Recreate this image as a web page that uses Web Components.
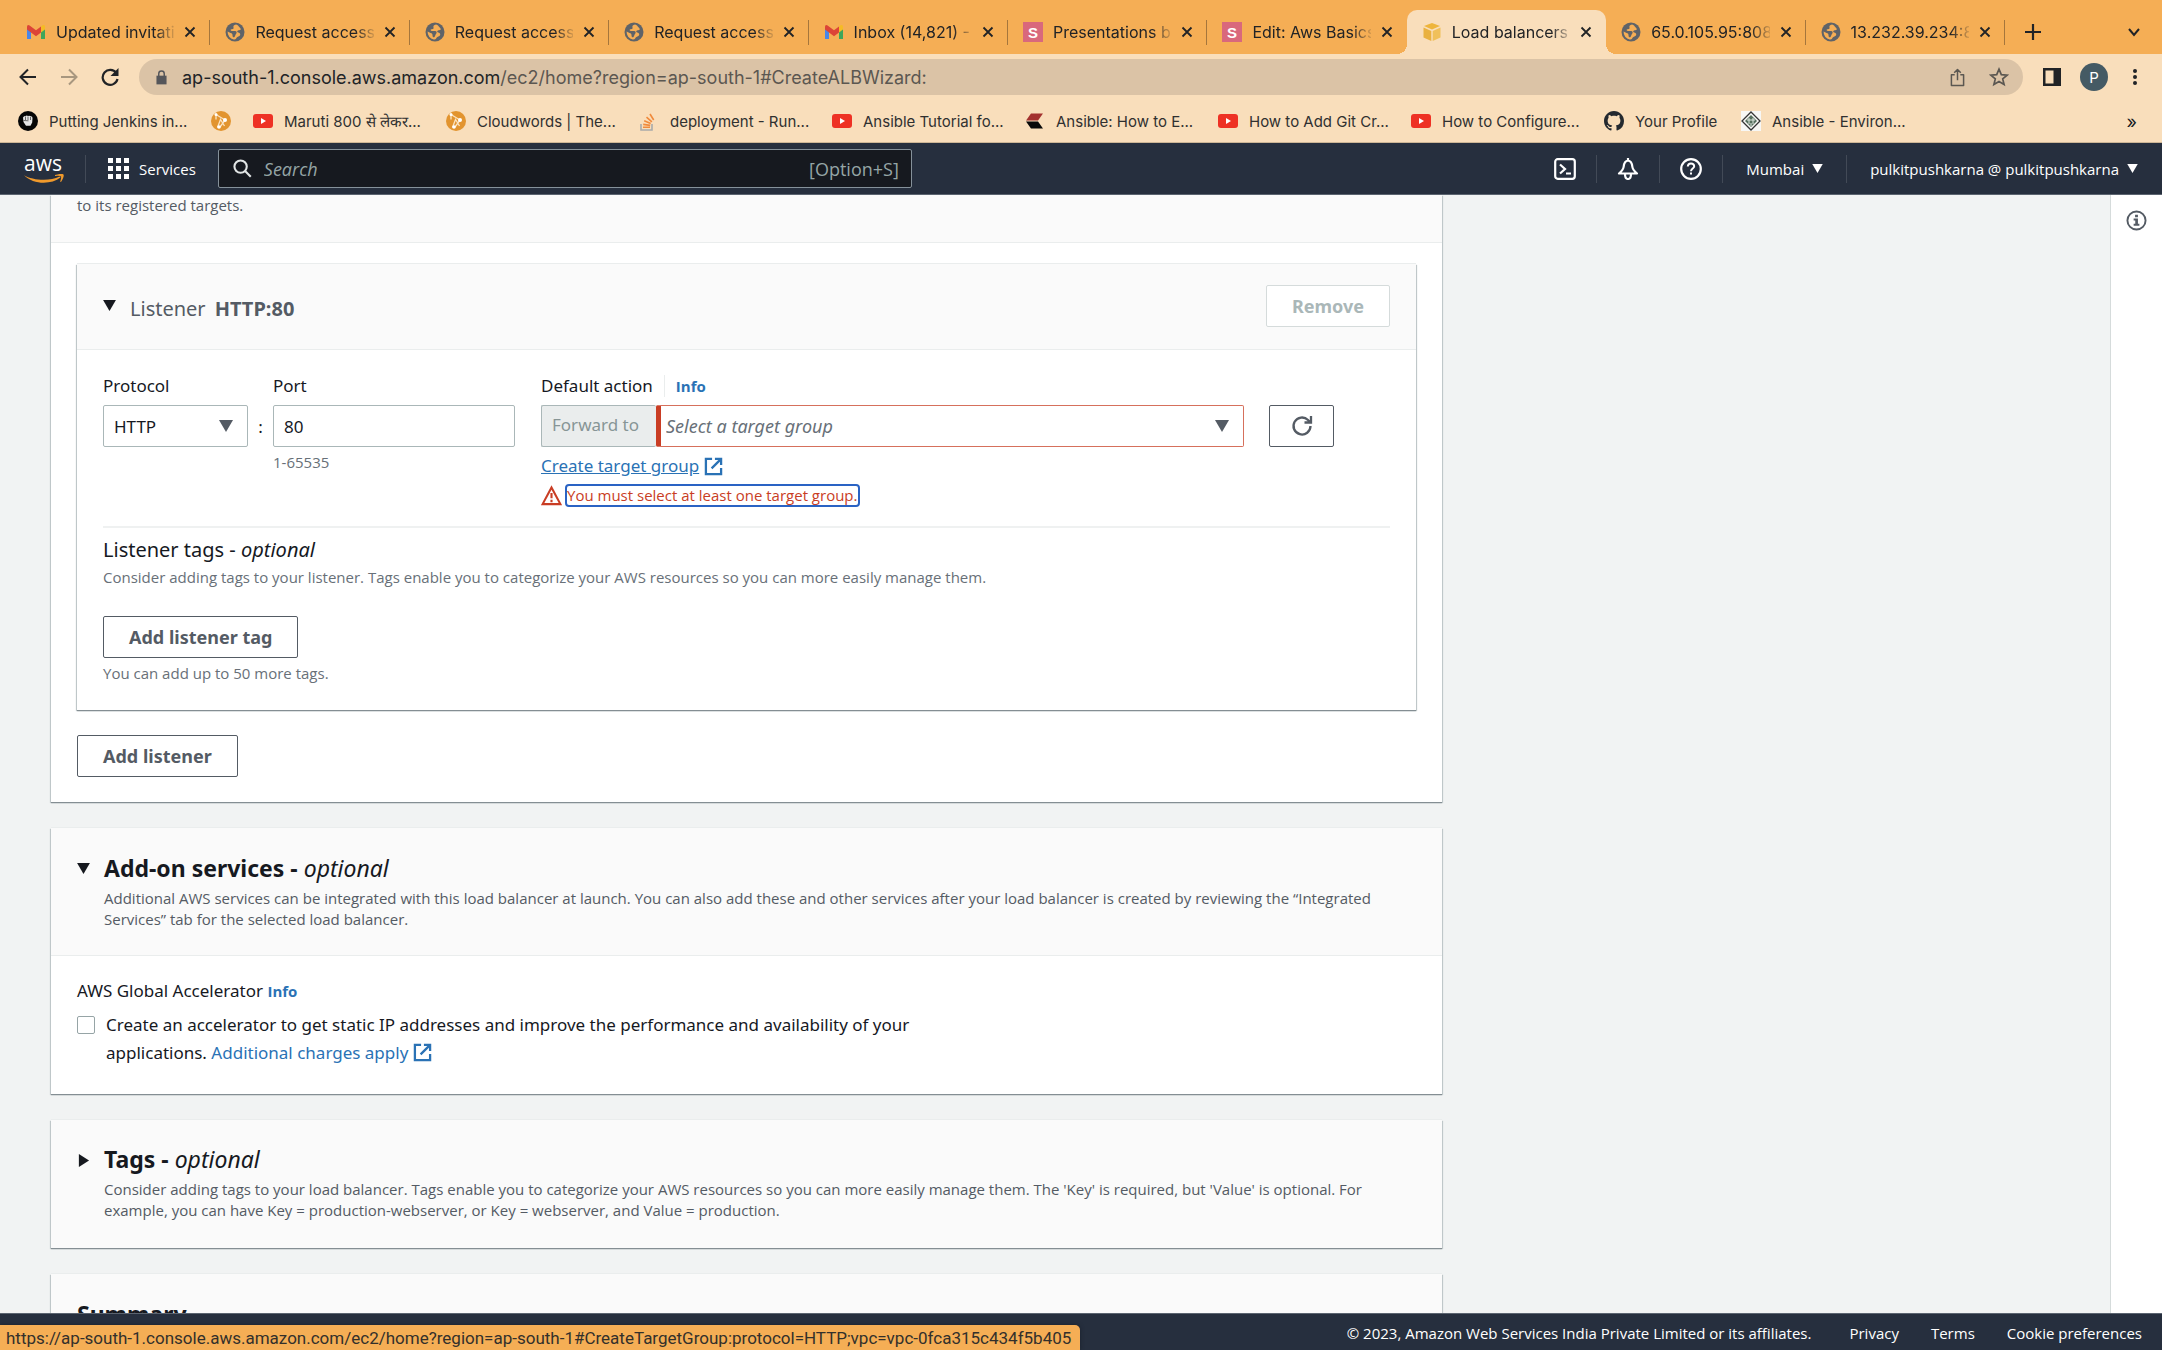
<!DOCTYPE html>
<html lang="en">
<head>
<meta charset="utf-8">
<title>Load balancers</title>
<style>
  html, body { margin: 0; height: 100%; }
  body {
    display: flex;
    flex-direction: column;
    overflow: hidden;
    background: #f1f3f3;
    color: #16191f;
    font-family: "Noto Sans", "Open Sans", sans-serif;
    font-size: 17px;
    --small: "Open Sans", "Noto Sans", sans-serif;
  }
</style>
</head>
<body>
<browser-tabs></browser-tabs>
<browser-toolbar></browser-toolbar>
<bookmark-bar></bookmark-bar>
<aws-nav></aws-nav>
<console-page></console-page>
<aws-footer></aws-footer>
<status-bubble>https://ap-south-1.console.aws.amazon.com/ec2/home?region=ap-south-1#CreateTargetGroup:protocol=HTTP;vpc=vpc-0fca315c434f5b405</status-bubble>

<script>
// name -> [viewBox, markup]
const ICONS = {
  gmail: ["0 0 20 20", `<path d="M1 5v12h4V8z" fill="#4a86e8"/><path d="M19 5v12h-4V8z" fill="#3fa65b"/><path d="M15 4.500l1.600-1.200Q19 2 19 5v2.500l-4 3z" fill="#f5bb25"/><path d="M1 7.500V5q0-3 2.600-1.600L10 8.300l5-3.800v6L10 14.200z" fill="#dc4437"/>`],
  globe: ["0 0 20 20", `<circle cx="10" cy="10" r="9.500" fill="#5f6368"/><path d="M11 2.500c-2 .3-3 1.500-2.500 3 .4 1.200-.5 1.800-1.800 1.700C5 7 5.500 9 7 9h3c2 0 2 2 1 3s-.6 2.500-1.800 3.200c-1 .5-1.700-.5-1.700-2s-.5-1.800-2-2.200L2.600 9.600A7.500 7.500 0 0 0 8.700 17.400c2.500.4 2.200-1.400 3.300-2.200 1.200-.8 2.800-.8 3.200-2.400.3-1.200-.9-1.900-2-2.200-1.500-.4-1.200-1.600-.2-2 1-.5 1.600-.3 2.500-.8.9-.6 0-1.300-.8-2.200-.9-1-1.700-2.900-3.700-3.100z" fill="#f5ae55"/>`],
  slides: ["0 0 20 20", `<path d="M0 0h20v20H0z" fill="#d9687c"/><text x="10" y="15.500" text-anchor="middle" font-family="Liberation Sans" font-size="15" font-weight="700" fill="#fff">S</text>`],
  cube: ["0 0 20 20", `<path d="M10 1l8 3-8 3.500L2 4z" fill="#eeb53c"/><path d="M1.500 5.500L9.300 9v10l-7.800-3.500z" fill="#e9b140"/><path d="M18.500 5.500L10.700 9v10l7.800-3.500z" fill="#f0c05a"/>`],
  close: ["0 0 12 12", `<path d="M1.500 1.500l9 9M10.500 1.500l-9 9" stroke="currentColor" stroke-width="1.800"/>`],
  plus: ["0 0 16 16", `<path d="M8 0v16M0 8h16" stroke="currentColor" stroke-width="2.200"/>`],
  chevron: ["0 0 12 12", `<path d="M1 3l5 6 5-6" fill="none" stroke="currentColor" stroke-width="2"/>`],
  back: ["0 0 18 18", `<path d="M17 9H2M9 1.500L1.500 9 9 16.500" fill="none" stroke="currentColor" stroke-width="2"/>`],
  forward: ["0 0 18 18", `<path d="M1 9h15M9 1.500L16.500 9 9 16.500" fill="none" stroke="currentColor" stroke-width="2"/>`],
  reload: ["0 0 18 18", `<path d="M15.300 5A7.500 7.500 0 1 0 16.500 11" fill="none" stroke="currentColor" stroke-width="2.200"/><path d="M17.500 0v8h-8z" fill="currentColor"/>`],
  lock: ["0 0 12 16", `<path d="M.5 6h11v9.500H.5z" fill="currentColor"/><path d="M3 7V4a3 3 0 0 1 6 0v3" fill="none" stroke="currentColor" stroke-width="1.600"/>`],
  share: ["0 0 16 20", `<path d="M5 7H1.500v11.500h13V7H11M8 13V1.500M4.500 5L8 1.500 11.500 5" fill="none" stroke="currentColor" stroke-width="1.600" stroke-linejoin="round"/>`],
  star: ["0 0 20 20", `<path d="M10 2.200l2.300 5.400 5.900.5-4.500 3.800 1.400 5.700-5.100-3-5.100 3 1.400-5.700-4.500-3.800 5.900-.5z" fill="none" stroke="currentColor" stroke-width="1.700"/>`],
  panel: ["0 0 18 18", `<path d="M0 0h18v18H0z" fill="currentColor"/><path d="M2.500 2.500h8v13h-8z" fill="#f9debb"/>`],
  dots: ["0 0 6 20", `<circle cx="3" cy="4" r="2" fill="currentColor"/><circle cx="3" cy="10" r="2" fill="currentColor"/><circle cx="3" cy="16" r="2" fill="currentColor"/>`],
  fist: ["0 0 20 20", `<circle cx="10" cy="10" r="10" fill="#060606"/><path d="M5 6.500Q6 4.500 7.500 5q1.200-1 2.500 0 1.500-.8 2.500.3 2-.3 2 1.700l-.3 4.500-1.700 3.200H8L5.500 11z" fill="#e6e6e6"/><path d="M7.500 5.500V9M10 5.500V9M12.500 6v3M5.500 9.500l5 .3" stroke="#333" stroke-width=".7"/>`],
  cloudwords: ["0 0 20 20", `<circle cx="10" cy="10" r="10" fill="#e2942f"/><path d="M5 3.500l9 5.500M5 3.500v5M14 9l-5 7M6.500 16.500l3-8 4 6.500" fill="none" stroke="#fbe3c0" stroke-width="1.300"/><circle cx="5" cy="3.500" r="1.500" fill="#fff"/><circle cx="14" cy="9" r="2" fill="#fff"/><circle cx="8" cy="16" r="1.800" fill="#fff"/>`],
  youtube: ["0 0 20 20", `<rect y="3" width="20" height="14" rx="3" fill="#ee3124"/><path d="M8 7l5 3-5 3z" fill="#fff"/>`],
  stack: ["0 0 20 20", `<path d="M2 13v6h11v-6" fill="none" stroke="#a9aaab" stroke-width="1.600"/><path d="M4 16.300h7M4.200 13.400l7 1M5.200 9.800l6.500 2.700M7.500 6.200l5.400 4.600M11 3l3.700 6" stroke="#f08a3c" stroke-width="1.600"/>`],
  kodekloud: ["0 0 20 20", `<path d="M6 2.500h12L13 9.500H1z" fill="#a3312e"/><path d="M1 10.500h12l5 7H6z" fill="#090909"/>`],
  github: ["0 0 16 16", `<path fill="#24292f" d="M8 0C3.580 0 0 3.580 0 8c0 3.540 2.290 6.530 5.470 7.590.4.070.55-.17.55-.38 0-.19-.01-.82-.01-1.490-2.010.37-2.530-.49-2.690-.94-.09-.23-.48-.94-.82-1.130-.28-.15-.68-.52-.01-.53.63-.01 1.080.58 1.230.82.72 1.210 1.870.87 2.330.66.07-.52.28-.87.51-1.070-1.780-.2-3.640-.89-3.640-3.950 0-.87.31-1.590.82-2.150-.08-.2-.36-1.020.08-2.120 0 0 .67-.21 2.200.82.64-.18 1.320-.27 2-.27s1.360.09 2 .27c1.530-1.040 2.200-.82 2.200-.82.44 1.100.16 1.920.08 2.120.51.56.82 1.270.82 2.150 0 3.070-1.870 3.750-3.650 3.950.29.25.54.73.54 1.480 0 1.070-.01 1.930-.01 2.200 0 .21.15.46.55.38A8 8 0 0 0 16 8c0-4.420-3.580-8-8-8z"/>`],
  jinja: ["0 0 20 20", `<path d="M0 0h20v20H0z" fill="#f7f7f5"/><path d="M10 1l9 9-9 9-9-9z" fill="none" stroke="#333" stroke-width="1.300"/><path d="M10 4l6 6-6 6-6-6z" fill="#56705e"/><path d="M6 9h8M8 7v6M12 7v6M10 12v3" stroke="#dfe8e1"/>`],
  smile: ["0 0 40 10", `<path d="M0 1.200C8 6 25 8 35.500 2.500l1 1C27 11 9 10.500 0 1.200z" fill="#f09a2c"/><path d="M31 1q7-2 8.500-.5 1 2-2.500 7.500l-.8-.3Q37.500 3.500 37 2.500q-1-1-6-.5z" fill="#f09a2c"/>`],
  grid: ["0 0 21 21", `<path d="M0 0h5v5H0zM8 0h5v5H8zM16 0h5v5h-5zM0 8h5v5H0zM8 8h5v5H8zM16 8h5v5h-5zM0 16h5v5H0zM8 16h5v5H8zM16 16h5v5h-5z" fill="currentColor"/>`],
  search: ["0 0 20 20", `<circle cx="8" cy="8" r="6.500" fill="none" stroke="currentColor" stroke-width="2.200"/><path d="M12.700 12.700l6 6" stroke="currentColor" stroke-width="2.200"/>`],
  shell: ["0 0 22 22", `<rect x="1.200" y="1.200" width="19.600" height="19.600" rx="2.500" fill="none" stroke="currentColor" stroke-width="2.200"/><path d="M6 6.500l5 4.500-5 4.500M12 15.500h5" fill="none" stroke="currentColor" stroke-width="2.200"/>`],
  bell: ["0 0 22 22", `<path d="M11 2.500c-3.500.5-4 3-4.300 6C6.500 11 5.500 12.500 2 15.500h18c-3.500-3-4.500-4.500-4.700-7-.3-3-.8-5.500-4.300-6zM11 0v3M8 16q0 5 3 5t3-5" fill="none" stroke="currentColor" stroke-width="2.200" stroke-linejoin="round"/>`],
  help: ["0 0 22 22", `<circle cx="11" cy="11" r="9.800" fill="none" stroke="currentColor" stroke-width="2.200"/><path d="M7.800 8.500q.2-3 3.200-3t3.200 2.700c0 2.300-3.200 2.300-3.200 5" fill="none" stroke="currentColor" stroke-width="2"/><path d="M10 14.500h2v2h-2z" fill="currentColor"/>`],
  info: ["0 0 22 22", `<circle cx="11" cy="11" r="9.500" fill="none" stroke="currentColor" stroke-width="2"/><path d="M9.500 5h3v2.500h-3zM8 9h4.500v5.500H14v2H8v-2h1.700V11H8z" fill="currentColor"/>`],
  down: ["0 0 14 12", `<path d="M0 0h14L7 12z" fill="currentColor"/>`],
  right: ["0 0 14 14", `<path d="M2 0v14l11-7z" fill="currentColor"/>`],
  external: ["0 0 20 20", `<path d="M8.500 2H2v16h16v-6.500M11.500 2H18v6.500M17.500 2.500L8 12" fill="none" stroke="currentColor" stroke-width="2.400"/>`],
  refresh: ["0 0 22 22", `<path d="M19.500 11a8.500 8.500 0 1 1-2.500-6l2 2M20 1v6.500h-6.500" fill="none" stroke="currentColor" stroke-width="2.300"/>`],
  warning: ["0 0 22 22", `<path d="M11 2.500L20.300 20H1.700z" fill="none" stroke="currentColor" stroke-width="2.200"/><path d="M11 8.500v5.500M11 15.500V18" stroke="currentColor" stroke-width="2.200"/>`]
};

class UiIcon extends HTMLElement {
  constructor() {
    super();
    this.attachShadow({ mode: "open" });
  }

  connectedCallback() {
    const [viewBox, markup] = ICONS[this.getAttribute("name")];
    const width = Number(this.getAttribute("size") || 20);
    const [, , vw, vh] = viewBox.split(" ").map(Number);
    this.shadowRoot.innerHTML = `
      <style>
        :host { display: inline-flex; flex: none; }
        svg { display: block; }
      </style>
      <svg width="${width}" height="${Math.round((width * vh) / vw)}" viewBox="${viewBox}" aria-hidden="true">${markup}</svg>
    `;
  }
}

// Small helper so each component only states its markup
class BaseElement extends HTMLElement {
  constructor() {
    super();
    this.attachShadow({ mode: "open" });
    this.shadowRoot.innerHTML = this.render();
  }
}

const BUTTON_RESET = `
  button {
    display: inline-flex; align-items: center; justify-content: center;
    padding: 0; border: 0; background: none;
    color: inherit; font: inherit;
  }
`;

class BrowserTabs extends BaseElement {
  render() {
    const tabs = [
      ["gmail", "Updated invitation"],
      ["globe", "Request access"],
      ["globe", "Request access"],
      ["globe", "Request access"],
      ["gmail", "Inbox (14,821) - p"],
      ["slides", "Presentations by"],
      ["slides", "Edit: Aws Basics"],
      ["cube", "Load balancers |", "active"],
      ["globe", "65.0.105.95:8080"],
      ["globe", "13.232.39.234:80"]
    ];
    return `
      <style>
        :host {
          display: flex; flex: none; height: 54px; padding-left: 11px;
          background: #f5ae55; color: #212326;
          font: 16px Inter, sans-serif;
        }
        .strip { flex: 1; display: grid; grid-template-columns: repeat(10, minmax(0, 1fr)); }
        .tab {
          display: flex; align-items: center; gap: 10px;
          position: relative; margin-top: 10px; padding: 0 14px 0 15px;
        }
        .tab::after {
          content: ""; position: absolute; right: 0; top: 10px;
          width: 1px; height: 25px; background: #a5763c;
        }
        .label {
          flex: 1; overflow: hidden; white-space: nowrap;
          mask-image: linear-gradient(to right, #000 84%, rgba(0, 0, 0, 0.15));
        }
        .active { background: #f9debb; border-radius: 10px 10px 0 0; }
        .active::before, .active::after {
          content: ""; position: absolute; top: auto; bottom: 0; width: 10px; height: 10px;
        }
        .active::before { left: -10px; background: radial-gradient(circle at 0 0, #f5ae55 10px, #f9debb 10px); }
        .active::after { right: -10px; background: radial-gradient(circle at 100% 0, #f5ae55 10px, #f9debb 10px); }
        .tab:has(+ .active)::after { display: none; }
        .end {
          flex: none; box-sizing: border-box; width: 157px; padding: 10px 22px 0 20px;
          display: flex; align-items: center; justify-content: space-between;
        }
        button { margin: 0; }
        ${BUTTON_RESET}
      </style>
      <div class="strip">
        ${tabs.map(([icon, label, state]) => `
          <div class="tab ${state || ""}">
            <ui-icon name="${icon}"></ui-icon>
            <span class="label">${label}</span>
            <button aria-label="Close tab"><ui-icon name="close" size="12"></ui-icon></button>
          </div>`).join("")}
      </div>
      <div class="end">
        <button aria-label="New tab"><ui-icon name="plus" size="16"></ui-icon></button>
        <button aria-label="Search tabs"><ui-icon name="chevron" size="12"></ui-icon></button>
      </div>
    `;
  }
}

class BrowserToolbar extends BaseElement {
  render() {
    return `
      <style>
        :host {
          display: flex; align-items: center; gap: 20px; flex: none;
          height: 46px; padding: 0 24px 0 19px;
          background: #f9debb; color: #212326;
          font: 18px Inter, sans-serif;
        }
        .nav { display: flex; gap: 23px; }
        .off { color: #a8977f; }
        .box {
          flex: 1; display: flex; align-items: center; gap: 15px;
          height: 36px; padding: 0 14px 0 17px; border-radius: 18px;
          background: #dbc3a6; color: #5b5751;
        }
        .lock { color: #55565a; display: flex; }
        .url { flex: 1; white-space: nowrap; }
        b { font-weight: 400; color: #212326; }
        .tools { display: flex; align-items: center; gap: 19px; }
        button { margin: 0; }
        .menu { margin-left: 5px; }
        ${BUTTON_RESET}
        .off { color: #a8977f; }
        .avatar {
          width: 28px; height: 28px; border-radius: 50%;
          background: #455a64; color: #fff; font-size: 15px;
        }
        .acts { display: flex; align-items: center; gap: 24px; }
      </style>
      <div class="nav">
        <button aria-label="Back"><ui-icon name="back" size="18"></ui-icon></button>
        <button class="off" aria-label="Forward"><ui-icon name="forward" size="18"></ui-icon></button>
        <button aria-label="Reload"><ui-icon name="reload" size="18"></ui-icon></button>
      </div>
      <div class="box">
        <span class="lock"><ui-icon name="lock" size="11"></ui-icon></span>
        <span class="url"><b>ap-south-1.console.aws.amazon.com</b>/ec2/home?region=ap-south-1#CreateALBWizard:</span>
        <div class="acts">
          <button aria-label="Share"><ui-icon name="share" size="15"></ui-icon></button>
          <button aria-label="Bookmark"><ui-icon name="star"></ui-icon></button>
        </div>
      </div>
      <div class="tools">
        <button aria-label="Side panel"><ui-icon name="panel" size="18"></ui-icon></button>
        <button class="avatar" aria-label="Profile">P</button>
        <button class="menu" aria-label="Menu"><ui-icon name="dots" size="6"></ui-icon></button>
      </div>
    `;
  }
}

class BookmarkBar extends BaseElement {
  render() {
    const items = [
      ["fist", "Putting Jenkins in..."],
      ["cloudwords", ""],
      ["youtube", "Maruti 800 से लेकर..."],
      ["cloudwords", "Cloudwords | The..."],
      ["stack", "deployment - Run..."],
      ["youtube", "Ansible Tutorial fo..."],
      ["kodekloud", "Ansible: How to E..."],
      ["youtube", "How to Add Git Cr..."],
      ["youtube", "How to Configure..."],
      ["github", "Your Profile", "short"],
      ["jinja", "Ansible - Environ..."]
    ];
    return `
      <style>
        :host {
          display: flex; align-items: center; gap: 22px; flex: none;
          box-sizing: border-box; height: 43px; padding: 0 25px 0 18px;
          background: #f9debb; border-bottom: 1px solid #cdb696;
          font: 15px Inter, sans-serif;
        }
        a {
          display: flex; align-items: center; gap: 11px;
          color: #303030; text-decoration: none; white-space: nowrap;
        }
        span { width: 140px; }
        .short span { width: 84px; }
        ${BUTTON_RESET}
        button { margin: 0 0 0 auto; font-size: 18px; }
      </style>
      ${items.map(([icon, label, size]) => `
        <a href="#" class="${size || ""}" aria-label="${label || "Cloudwords"}">
          <ui-icon name="${icon}"></ui-icon>${label ? `<span>${label}</span>` : ""}
        </a>`).join("")}
      <button aria-label="More bookmarks">»</button>
    `;
  }
}

class AwsNav extends BaseElement {
  render() {
    return `
      <style>
        :host {
          display: flex; align-items: center; flex: none;
          box-sizing: border-box; height: 52px; padding: 0 24px;
          background: #262f3e; border-bottom: 1px solid #5b6470; color: #fff;
          font: 500 15px var(--small);
        }
        .logo {
          display: flex; flex-direction: column; gap: 2px; width: 40px;
          color: #fff; text-decoration: none; font-size: 21px; line-height: 18px;
        }
        i { width: 1px; height: 28px; background: #424a57; }
        .logo + i { margin-left: 21px; }
        button { margin: 0; }
        ${BUTTON_RESET}
        .services { gap: 10px; margin: 0 22px; }
        .search {
          display: flex; align-items: center; gap: 12px; box-sizing: border-box;
          flex: 0 1 694px; height: 39px; padding: 0 12px 0 14px;
          background: #16191f; border: 1px solid #85919a; border-radius: 2px;
          color: #95a5a6; font-weight: 400; font-size: 18px;
        }
        .search ui-icon { color: #e2e6e6; }
        input {
          flex: 1; min-width: 0; padding: 0; border: 0; outline: 0; background: none;
          color: #fff; font: inherit;
        }
        input::placeholder { color: #95a5a6; font-style: italic; opacity: 1; }
        .right { margin-left: auto; display: flex; align-items: center; gap: 20px; }
        .right button { gap: 8px; }
        .right .menu { margin: 0 3px; }
        .right .menu:last-child { margin-right: 0; }
      </style>
      <a class="logo" href="#"><span>aws</span><ui-icon name="smile" size="40"></ui-icon></a>
      <i></i>
      <button class="services"><ui-icon name="grid" size="21"></ui-icon>Services</button>
      <label class="search">
        <ui-icon name="search" size="19"></ui-icon>
        <input type="text" placeholder="Search" aria-label="Search">
        <span>[Option+S]</span>
      </label>
      <div class="right">
        <button aria-label="CloudShell"><ui-icon name="shell" size="22"></ui-icon></button>
        <i></i>
        <button aria-label="Notifications"><ui-icon name="bell" size="22"></ui-icon></button>
        <i></i>
        <button aria-label="Help"><ui-icon name="help" size="22"></ui-icon></button>
        <i></i>
        <button class="menu">Mumbai <ui-icon name="down" size="11"></ui-icon></button>
        <i></i>
        <button class="menu">pulkitpushkarna @ pulkitpushkarna <ui-icon name="down" size="11"></ui-icon></button>
      </div>
    `;
  }
}

class AwsButton extends BaseElement {
  static get observedAttributes() {
    return ["disabled"];
  }

  attributeChangedCallback() {
    this.shadowRoot.querySelector("button").disabled = this.hasAttribute("disabled");
  }

  render() {
    return `
      <style>
        :host { display: inline-flex; flex: none; }
        button {
          box-sizing: border-box; height: 42px; padding: 0 25px;
          display: flex; align-items: center; justify-content: center;
          background: #fff; border: 1px solid #545b64; border-radius: 2px;
          color: #545b64; font: inherit; font-size: 18px; font-weight: 700;
        }
        button:disabled { border-color: #d5dbdb; color: #aab7b8; }
        :host([icon]) button { width: 65px; padding: 0; }
      </style>
      <button><slot></slot></button>
    `;
  }
}

class AwsCard extends BaseElement {
  render() {
    return `
      <style>
        :host {
          display: block; background: #fff;
          box-shadow: 0 1px 1px 0 #848e93, 1px 1px 1px 0 #ccd3d4, -1px 1px 1px 0 #ccd3d4, 0 -1px 0 0 #eaeded;
        }
        header {
          display: grid; grid-template-columns: auto 1fr auto; align-items: start;
          padding: 26px 26px 25px; background: #fafafa;
          border-bottom: 1px solid #eaeded;
        }
        :host([cut]) header { padding: 0 26px 26px; }
        :host([nested]) header { padding: 21px 26px 22px; }
        :host([closed]) header { border-bottom: 0; padding: 25px 26px 27px; }
        .mark { display: flex; width: 27px; padding-top: 9px; }
        :host([nested]) .mark { padding-top: 15px; }
        :host(:not([icon])) .mark { display: none; }
        h2 { margin: 0; font-size: 23px; line-height: 28px; font-weight: 700; }
        :host([nested]) h2 { padding-top: 10px; font-size: 20px; color: #545b64; }
        :host([cut]) h2 { display: none; }
        .note { font: 15px/21px var(--small); color: #545b64; }
        .note ::slotted(*) { display: block; padding-top: 6px; max-width: 1290px; }
        :host([cut]) .note ::slotted(*) { padding-top: 0; }
        .body { padding: 19px 26px 27px; }
        :host([cut]) .body { padding: 21px 26px 25px; }
        :host([nested]) .body { padding: 24px 26px 26px; }
        :host([closed]) .body { display: none; }
      </style>
      <header>
        <span class="mark"></span>
        <div>
          <h2><slot name="title"></slot></h2>
          <div class="note"><slot name="note"></slot></div>
        </div>
        <slot name="action"></slot>
      </header>
      <div class="body"><slot></slot></div>
    `;
  }

  connectedCallback() {
    const icon = this.getAttribute("icon");
    if (icon) {
      this.shadowRoot.querySelector(".mark").innerHTML = `<ui-icon name="${icon}" size="13"></ui-icon>`;
    }
  }
}

class ListenerForm extends BaseElement {
  render() {
    return `
      <style>
        :host { display: block; }
        .fields { display: flex; align-items: flex-start; }
        .title, label { display: block; height: 24px; line-height: 24px; }
        .title { display: flex; align-items: center; gap: 11px; }
        .title i { width: 1px; height: 22px; background: #eaeded; }
        .control { display: grid; margin-top: 7px; height: 42px; }
        .control > * { grid-area: 1 / 1; }
        .control ui-icon { align-self: center; justify-self: end; margin-right: 15px; color: #545b64; pointer-events: none; }
        select, input, .forward {
          box-sizing: border-box; width: 100%; height: 42px; margin: 0; padding: 0 10px;
          appearance: none; outline: 0; background: #fff;
          border: 1px solid #aab7b8; border-radius: 2px;
          color: #16191f; font: inherit;
        }
        .protocol { width: 145px; }
        .colon { width: 25px; margin-top: 31px; line-height: 44px; text-align: center; }
        .port { width: 242px; }
        .action { width: 703px; margin-left: 26px; }
        .row { display: flex; }
        .forward {
          width: 115px; flex: none; margin-top: 7px; line-height: 38px;
          background: #eaeded; color: #879596; border-right: 0;
        }
        .row .control { flex: 1; }
        .row select {
          padding: 0 5px; border-color: #d6705c; border-left: 5px solid #c93d24;
          color: #687078; font-style: italic; font-size: 18px;
        }
        a { color: #2a72b5; }
        .info { font: 700 15px var(--small); text-decoration: none; }
        .hint { font: 15px/21px var(--small); color: #687078; }
        .port .hint { padding-top: 5px; }
        .create { display: flex; align-items: center; gap: 5px; width: max-content; padding-top: 7px; line-height: 24px; }
        .error { display: flex; align-items: center; gap: 3px; padding-top: 6px; color: #c93d24; font: 15px/19px var(--small); }
        .error span { border: 2px solid #2a63c4; border-radius: 4px; }
        aws-button { margin: 31px 0 0 25px; color: #545b64; }
        hr { margin: 19px 0 0; border: 0; border-top: 2px solid #eff1f1; }
        h3 { margin: 10px 0 5px; font-size: 20px; line-height: 24px; font-weight: 400; }
        .tags { display: block; margin: 28px 0 5px; }
      </style>
      <div class="fields">
        <div class="protocol">
          <label for="protocol">Protocol</label>
          <div class="control">
            <select id="protocol"><option>HTTP</option></select>
            <ui-icon name="down" size="14"></ui-icon>
          </div>
        </div>
        <span class="colon">:</span>
        <div class="port">
          <label for="port">Port</label>
          <div class="control"><input id="port" type="text" value="80"></div>
          <div class="hint">1-65535</div>
        </div>
        <div class="action">
          <div class="title"><label for="target">Default action</label><i></i><a class="info" href="#">Info</a></div>
          <div class="row">
            <span class="forward">Forward to</span>
            <div class="control">
              <select id="target"><option>Select a target group</option></select>
              <ui-icon name="down" size="14"></ui-icon>
            </div>
          </div>
          <a class="create" href="#">Create target group <ui-icon name="external" size="19"></ui-icon></a>
          <div class="error"><ui-icon name="warning" size="21"></ui-icon><span>You must select at least one target group.</span></div>
        </div>
        <aws-button icon><ui-icon name="refresh" size="22"></ui-icon></aws-button>
      </div>
      <hr>
      <h3>Listener tags - <em>optional</em></h3>
      <div class="hint">Consider adding tags to your listener. Tags enable you to categorize your AWS resources so you can more easily manage them.</div>
      <aws-button class="tags">Add listener tag</aws-button>
      <div class="hint">You can add up to 50 more tags.</div>
    `;
  }
}

class AcceleratorOption extends BaseElement {
  render() {
    return `
      <style>
        :host { display: block; }
        .name { line-height: 28px; padding-top: 2px; }
        a { color: #2a72b5; text-decoration: none; }
        .name a { font: 700 15px var(--small); }
        .pick { display: flex; align-items: flex-start; gap: 11px; margin-top: 6px; max-width: 870px; line-height: 28px; }
        input {
          appearance: none; flex: none; box-sizing: border-box;
          width: 18px; height: 18px; margin: 5px 0 0;
          border: 1px solid #96a4a6; border-radius: 2px; background: #fff;
        }
        ui-icon { vertical-align: -3px; }
      </style>
      <div class="name">AWS Global Accelerator <a href="#">Info</a></div>
      <div class="pick">
        <input type="checkbox" id="accelerator">
        <label for="accelerator">Create an accelerator to get static IP addresses and improve the performance and availability of your applications. <a href="#">Additional charges apply <ui-icon name="external" size="19"></ui-icon></a></label>
      </div>
    `;
  }
}

class ConsolePage extends BaseElement {
  render() {
    return `
      <style>
        :host { display: flex; flex: 1; min-height: 0; overflow: hidden; }
        main {
          flex: 1; min-width: 0; padding: 0 51px;
          display: flex; flex-direction: column; gap: 26px;
        }
        main > aws-card { width: 100%; max-width: 1391px; flex: none; }
        em { font-weight: 400; }
        .kind { font-weight: 400; margin-right: 9px; }
        .add { margin-top: 25px; }
        aside {
          flex: none; width: 51px; padding-top: 15px;
          display: flex; justify-content: center; align-items: flex-start;
          background: #fff; border-left: 1px solid #d5dbdb; color: #545b64;
        }
        ${BUTTON_RESET}
      </style>
      <main>
        <aws-card cut>
          <span slot="note">to its registered targets.</span>
          <aws-card nested icon="down">
            <span slot="title"><span class="kind">Listener</span>HTTP:80</span>
            <aws-button slot="action" disabled>Remove</aws-button>
            <listener-form></listener-form>
          </aws-card>
          <aws-button class="add">Add listener</aws-button>
        </aws-card>
        <aws-card icon="down">
          <span slot="title">Add-on services - <em>optional</em></span>
          <span slot="note">Additional AWS services can be integrated with this load balancer at launch. You can also add these and other services after your load balancer is created by reviewing the “Integrated Services” tab for the selected load balancer.</span>
          <accelerator-option></accelerator-option>
        </aws-card>
        <aws-card icon="right" closed>
          <span slot="title">Tags - <em>optional</em></span>
          <span slot="note">Consider adding tags to your load balancer. Tags enable you to categorize your AWS resources so you can more easily manage them. The 'Key' is required, but 'Value' is optional. For example, you can have Key = production-webserver, or Key = webserver, and Value = production.</span>
        </aws-card>
        <aws-card>
          <span slot="title">Summary</span>
        </aws-card>
      </main>
      <aside><button aria-label="Info panel"><ui-icon name="info" size="21"></ui-icon></button></aside>
    `;
  }
}

class AwsFooter extends BaseElement {
  render() {
    return `
      <style>
        :host {
          display: flex; align-items: center; justify-content: flex-end; gap: 32px;
          flex: none; box-sizing: border-box; height: 37px; padding: 2px 20px 0 0;
          background: #262f3e; border-top: 1px solid #5b6470; color: #fff;
          font: 500 15px var(--small);
        }
        a { color: inherit; text-decoration: none; }
        span { margin-right: 6px; }
      </style>
      <span>© 2023, Amazon Web Services India Private Limited or its affiliates.</span>
      <a href="#">Privacy</a>
      <a href="#">Terms</a>
      <a href="#">Cookie preferences</a>
    `;
  }
}

class StatusBubble extends BaseElement {
  render() {
    return `
      <style>
        :host {
          position: absolute; left: 0; bottom: 0; box-sizing: border-box;
          height: 25px; padding: 0 9px 0 6px; border-radius: 0 5px 0 0;
          background: #f5ae55; color: #33302b; box-shadow: 0 0 4px #1a212c;
          font: 17px Roboto, sans-serif; line-height: 26px; white-space: nowrap;
        }
      </style>
      <slot></slot>
    `;
  }
}

customElements.define("ui-icon", UiIcon);
customElements.define("aws-button", AwsButton);
customElements.define("aws-card", AwsCard);
customElements.define("listener-form", ListenerForm);
customElements.define("accelerator-option", AcceleratorOption);
customElements.define("browser-tabs", BrowserTabs);
customElements.define("browser-toolbar", BrowserToolbar);
customElements.define("bookmark-bar", BookmarkBar);
customElements.define("aws-nav", AwsNav);
customElements.define("console-page", ConsolePage);
customElements.define("aws-footer", AwsFooter);
customElements.define("status-bubble", StatusBubble);
</script>
</body>
</html>
